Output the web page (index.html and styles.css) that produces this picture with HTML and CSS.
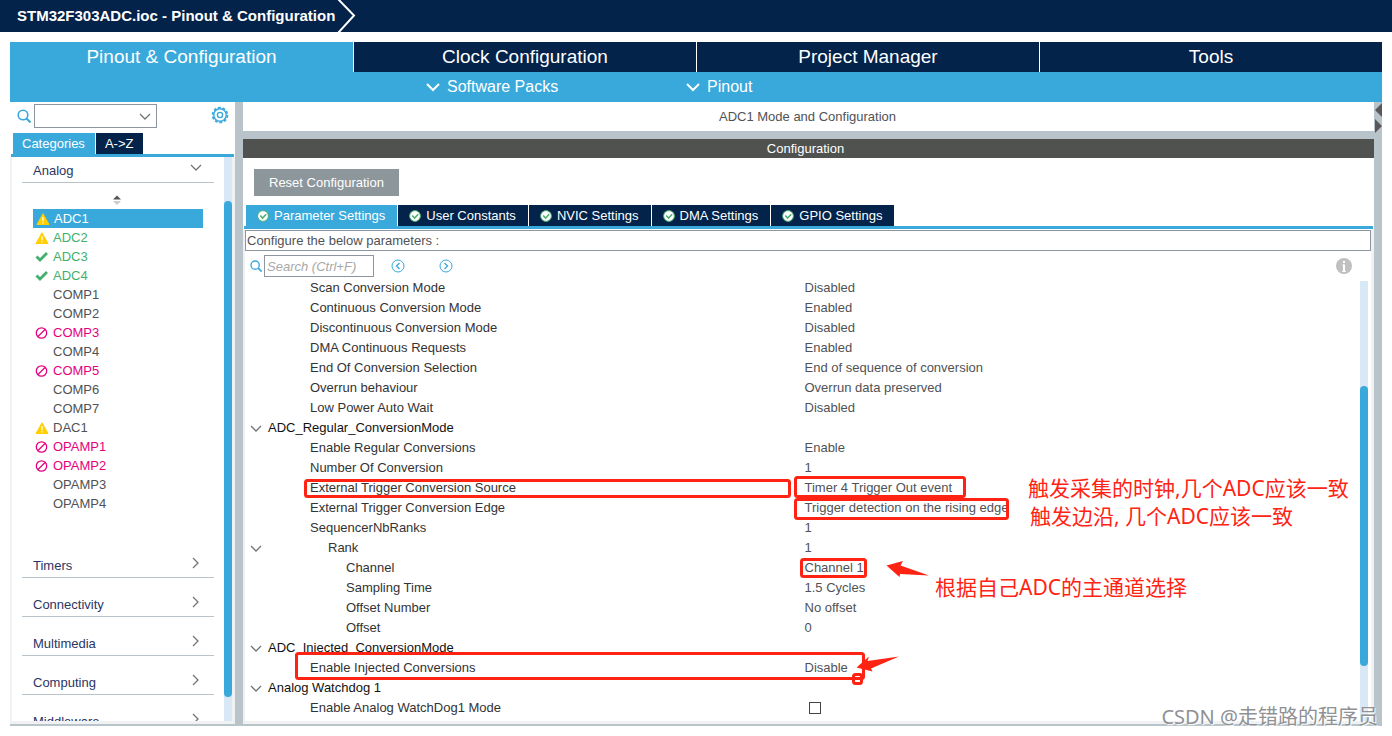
FILE: index.html
```html
<!DOCTYPE html>
<html lang="en">
<head>
<meta charset="utf-8">
<title>STM32F303ADC.ioc - Pinout &amp; Configuration</title>
<link rel="stylesheet" href="styles.css">
</head>
<body>
<svg class="defs" aria-hidden="true">
  <symbol id="down" viewBox="0 0 12 8"><path d="M1 1l5 5 5-5" fill="none" stroke="currentColor" stroke-width="1.3"/></symbol>
  <symbol id="right" viewBox="0 0 8 12"><path d="M1 1l5 5-5 5" fill="none" stroke="currentColor" stroke-width="1.3"/></symbol>
  <symbol id="lens" viewBox="0 0 14 14"><circle cx="6" cy="6" r="4.8" fill="none" stroke="currentColor" stroke-width="1.6"/><path d="M9.5 9.5l4 4" stroke="currentColor" stroke-width="2"/></symbol>
  <symbol id="warn" viewBox="0 0 14 12"><path d="M7 .8L13 11.5H1z" fill="#ffcf01" stroke="#ffcf01" stroke-linejoin="round"/><path d="M7 4v4.2M7 9.3v1.2" stroke="#fff" stroke-width="1.2"/></symbol>
  <symbol id="check" viewBox="0 0 14 12"><path d="M1.5 5.5L5 9l7-7" fill="none" stroke="#42b06d" stroke-width="2.8"/></symbol>
  <symbol id="ban" viewBox="0 0 14 12"><circle cx="6.5" cy="6" r="5.2" fill="none" stroke="#e6007e" stroke-width="1.3"/><path d="M3 9.5l7-7" stroke="#e6007e" stroke-width="1.2"/></symbol>
  <symbol id="ok" viewBox="0 0 12 12"><circle cx="6" cy="6" r="5.4" fill="#fff" stroke="#49b170" stroke-width="1"/><path d="M3.2 5.6l2.4 2.5 3.6-3.8" fill="none" stroke="#49b170" stroke-width="1.5"/></symbol>
</svg>
<div class="page">
  <header class="title">
    <h1>STM32F303ADC.ioc - Pinout &amp; Configuration</h1>
    <svg class="crumb" viewBox="0 0 20 32"><path d="M2 -1L18 15.500 2 33" fill="none" stroke="#fff" stroke-width="2"/></svg>
  </header>
  <nav class="tabs">
    <button class="active">Pinout &amp; Configuration</button>
    <button>Clock Configuration</button>
    <button>Project Manager</button>
    <button>Tools</button>
  </nav>
  <div class="menus">
    <button><svg viewBox="0 0 14 10"><path d="M1 2l6 6 6-6" fill="none" stroke="#fff" stroke-width="2"/></svg>Software Packs</button>
    <button><svg viewBox="0 0 14 10"><path d="M1 2l6 6 6-6" fill="none" stroke="#fff" stroke-width="2"/></svg>Pinout</button>
  </div>
  <main class="work">
    <aside class="side">
      <div class="find">
        <svg class="lens"><use href="#lens"/></svg>
        <div class="combo"><select aria-label="Find peripheral"><option></option></select><svg class="down"><use href="#down"/></svg></div>
        <button class="gear" aria-label="Settings"><svg viewBox="0 0 18 18"><g fill="none" stroke="#39a9dc" stroke-width="1.400"><circle cx="9" cy="9" r="6.200"/><circle cx="9" cy="9" r="2.600"/><circle cx="9" cy="9" r="7.400" stroke-width="1.800" stroke-dasharray="2.900 1.750"/></g></svg></button>
      </div>
      <div class="subtabs side-tabs"><button class="active">Categories</button><button>A-&gt;Z</button></div>
      <div class="tree">
        <div class="tree-body">
          <button class="cat">Analog<svg class="down"><use href="#down"/></svg></button>
          <svg class="sort" viewBox="0 0 8 10"><path d="M0 4.500L4 .5l4 4z" fill="#555"/><path d="M0 6h8L4 10z" fill="#ccc"/></svg>
          <ul>
            <li class="sel"><svg><use href="#warn"/></svg>ADC1</li>
            <li class="green"><svg><use href="#warn"/></svg>ADC2</li>
            <li class="green"><svg><use href="#check"/></svg>ADC3</li>
            <li class="green"><svg><use href="#check"/></svg>ADC4</li>
            <li><svg></svg>COMP1</li>
            <li><svg></svg>COMP2</li>
            <li class="pink"><svg><use href="#ban"/></svg>COMP3</li>
            <li><svg></svg>COMP4</li>
            <li class="pink"><svg><use href="#ban"/></svg>COMP5</li>
            <li><svg></svg>COMP6</li>
            <li><svg></svg>COMP7</li>
            <li><svg><use href="#warn"/></svg>DAC1</li>
            <li class="pink"><svg><use href="#ban"/></svg>OPAMP1</li>
            <li class="pink"><svg><use href="#ban"/></svg>OPAMP2</li>
            <li><svg></svg>OPAMP3</li>
            <li><svg></svg>OPAMP4</li>
          </ul>
          <button class="cat">Timers<svg class="right"><use href="#right"/></svg></button>
          <button class="cat">Connectivity<svg class="right"><use href="#right"/></svg></button>
          <button class="cat">Multimedia<svg class="right"><use href="#right"/></svg></button>
          <button class="cat">Computing<svg class="right"><use href="#right"/></svg></button>
          <button class="cat">Middleware<svg class="right"><use href="#right"/></svg></button>
        </div>
        <div class="bar side-bar"><i></i></div>
      </div>
    </aside>
    <section class="center">
      <h2 class="mode">ADC1 Mode and Configuration</h2>
      <h3 class="conf">Configuration</h3>
      <div class="panel">
        <button class="reset">Reset Configuration</button>
        <div class="subtabs">
          <button class="active"><svg><use href="#ok"/></svg>Parameter Settings</button>
          <button><svg><use href="#ok"/></svg>User Constants</button>
          <button><svg><use href="#ok"/></svg>NVIC Settings</button>
          <button><svg><use href="#ok"/></svg>DMA Settings</button>
          <button><svg><use href="#ok"/></svg>GPIO Settings</button>
        </div>
        <div class="params">
          <p class="hint">Configure the below parameters :</p>
          <div class="search">
            <svg class="lens"><use href="#lens"/></svg>
            <input type="text" placeholder="Search (Ctrl+F)" aria-label="Search parameters">
            <button aria-label="Previous"><svg viewBox="0 0 14 14" fill="none" stroke="#39a9dc"><circle cx="7" cy="7" r="6"/><path d="M8.500 4L5.500 7l3 3" stroke-width="1.300"/></svg></button>
            <button aria-label="Next"><svg viewBox="0 0 14 14" fill="none" stroke="#39a9dc"><circle cx="7" cy="7" r="6"/><path d="M5.500 4l3 3-3 3" stroke-width="1.300"/></svg></button>
            <svg class="info" viewBox="0 0 16 16"><circle cx="8" cy="8" r="8" fill="#c0c0c0"/><path d="M8 3v2M8 6.500v7" stroke="#fff" stroke-width="2"/><path d="M6.500 7H8M6 13.300h4" stroke="#fff"/></svg>
          </div>
          <div class="grid">
            <table>
              <tr><td class="p">Scan Conversion Mode</td><td>Disabled</td></tr>
              <tr><td class="p">Continuous Conversion Mode</td><td>Enabled</td></tr>
              <tr><td class="p">Discontinuous Conversion Mode</td><td>Disabled</td></tr>
              <tr><td class="p">DMA Continuous Requests</td><td>Enabled</td></tr>
              <tr><td class="p">End Of Conversion Selection</td><td>End of sequence of conversion</td></tr>
              <tr><td class="p">Overrun behaviour</td><td>Overrun data preserved</td></tr>
              <tr><td class="p">Low Power Auto Wait</td><td>Disabled</td></tr>
              <tr><td class="g" colspan="2"><svg class="down"><use href="#down"/></svg>ADC_Regular_ConversionMode</td></tr>
              <tr><td class="p">Enable Regular Conversions</td><td>Enable</td></tr>
              <tr><td class="p">Number Of Conversion</td><td>1</td></tr>
              <tr><td class="p">External Trigger Conversion Source</td><td>Timer 4 Trigger Out event</td></tr>
              <tr><td class="p">External Trigger Conversion Edge</td><td>Trigger detection on the rising edge</td></tr>
              <tr><td class="p">SequencerNbRanks</td><td>1</td></tr>
              <tr><td class="g rank"><svg class="down"><use href="#down"/></svg>Rank</td><td>1</td></tr>
              <tr><td class="c">Channel</td><td>Channel 1</td></tr>
              <tr><td class="c">Sampling Time</td><td>1.5 Cycles</td></tr>
              <tr><td class="c">Offset Number</td><td>No offset</td></tr>
              <tr><td class="c">Offset</td><td>0</td></tr>
              <tr><td class="g" colspan="2"><svg class="down"><use href="#down"/></svg>ADC_Injected_ConversionMode</td></tr>
              <tr><td class="p">Enable Injected Conversions</td><td>Disable</td></tr>
              <tr><td class="g" colspan="2"><svg class="down"><use href="#down"/></svg>Analog Watchdog 1</td></tr>
              <tr><td class="p"><label for="wd1">Enable Analog WatchDog1 Mode</label></td><td><input type="checkbox" id="wd1"></td></tr>
            </table>
            <div class="bar grid-bar"><i></i></div>
          </div>
        </div>
      </div>
    </section>
    <div class="rail"><svg viewBox="0 0 8 32"><path d="M8 1v14L1 8zM1 17v14l7-7z" fill="#58595b"/></svg></div>
  </main>
  <div class="notes">
    <svg class="marks" viewBox="0 0 1392 736">
      <g fill="none" stroke="#ff2314" stroke-width="3">
        <rect x="305.500" y="480.500" width="484" height="16" rx="2"/>
        <rect x="795.500" y="477.500" width="169" height="19" rx="2"/>
        <rect x="795.500" y="499.500" width="212" height="19" rx="2"/>
        <rect x="801.500" y="559.500" width="64" height="17" rx="2"/>
        <rect x="296.500" y="653.500" width="567" height="25" rx="2"/>
        <rect x="853.500" y="674.500" width="8" height="9" rx="2"/>
      </g>
      <path d="M886.500 565.500L903 561l-2.500 4.500L929 575.500l-29-1.500-.5 3z" fill="#ff2314"/>
      <path d="M856.500 667.500L869 656.500l-1.500 4.500 31.500-4.500-28 12 1.500 3z" fill="#ff2314"/>
    </svg>
    <p class="n1">触发采集的时钟,几个ADC应该一致</p>
    <p class="n2">触发边沿, 几个ADC应该一致</p>
    <p class="n3">根据自己ADC的主通道选择</p>
    <p class="credit">CSDN @走错路的程序员</p>
  </div>
</div>
</body>
</html>
```
FILE: styles.css
```css
* { box-sizing: border-box; }
body { margin: 0; background: #fff; color: #505255; font: 13px/20px "Liberation Sans", Arial, sans-serif; }
h1, h2, h3, p, ul { margin: 0; padding: 0; font-size: inherit; font-weight: 400; }
button { border: 0; padding: 0; background: none; color: inherit; font: inherit; cursor: pointer; }
svg { display: block; flex: none; }
.defs { position: absolute; width: 0; height: 0; }
.page { position: relative; height: 100vh; padding-bottom: 10px; display: flex; flex-direction: column; overflow: hidden; }

.title { display: flex; flex: none; height: 32px; padding-left: 17px; background: #03234b; color: #fff; }
.title h1 { font-size: 15px; font-weight: 700; line-height: 32px; }
.crumb { width: 20px; height: 32px; margin-left: 1px; }

.tabs { display: grid; grid-template-columns: repeat(4, 1fr); flex: none; height: 30px; margin: 10px 10px 0; background: #03234b; color: #fff; font-size: 19px; }
.tabs button + button { border-left: 1px solid #fff; }
.tabs .active { background: #39a9dc; }
.menus { display: flex; flex: none; height: 30px; margin: 0 10px; padding-left: 416px; background: #39a9dc; color: #fff; font-size: 16px; }
.menus button { display: flex; align-items: center; gap: 7px; width: 260px; }
.menus svg { width: 14px; height: 10px; }

.work { display: flex; flex: 1; min-height: 0; margin: 0 10px; padding-bottom: 2px; background: #b9c4ca; }
.side { display: flex; flex-direction: column; flex: none; width: 225px; background: #fff; }
.find { display: flex; flex: none; height: 31px; padding: 2px 6px 0 7px; }
.lens { width: 14px; height: 14px; color: #39a9dc; }
.find .lens { margin: 5px 3px 0 0; }
.combo { position: relative; width: 123px; height: 24px; }
.combo select { width: 100%; height: 100%; border: 1px solid #8d969e; border-radius: 0; background: #fff; appearance: none; }
.combo .down { position: absolute; right: 6px; top: 9px; pointer-events: none; }
.down { width: 12px; height: 8px; color: #70757a; }
.right { width: 8px; height: 12px; color: #70757a; }
.gear { margin-left: auto; height: 22px; }
.gear svg { width: 18px; height: 18px; }

.subtabs { display: flex; flex: none; gap: 1px; height: 24px; padding-left: 2px; margin: 0 1px; border-bottom: 3px solid #39a9dc; color: #fff; }
.subtabs button { display: flex; align-items: center; gap: 5px; padding: 0 12px 0 11px; background: #03234b; }
.subtabs .active { background: #39a9dc; }
.subtabs svg { width: 12px; height: 12px; }
.subtabs.side-tabs button { padding: 0 10px 0 9px; }

.tree { display: flex; flex: 1; min-height: 0; border: solid #f0f1f2; border-width: 0 3px 3px 2px; }
.tree-body { flex: 1; padding: 0 10px; overflow: hidden; }
.cat { display: flex; align-items: center; justify-content: space-between; width: 100%; height: 26px; margin-top: 13px; padding: 2px 12px 0 11px; border-bottom: 1px solid #b9c4ca; color: #2b3564; }
.cat:first-child { margin-top: 0; }
.cat svg { margin-bottom: 6px; }
.cat .right { margin-right: 2px; }
.sort { width: 8px; height: 10px; margin: 12px auto 4px 91px; }
.tree ul { margin: 0 11px 39px; list-style: none; }
.tree li { display: flex; align-items: center; gap: 4px; height: 19px; padding-left: 2px; line-height: 18px; }
.tree li svg { width: 14px; height: 12px; }
.tree .sel { padding-left: 3px; background: #39a9dc; color: #fff; }
.green { color: #42b06d; }
.pink { color: #e6007e; }
.bar { width: 8px; background: #d9e8f5; }
.bar i { display: block; border-radius: 4px; background: #39a9dc; }
.side-bar { padding: 44px 0 24px; }
.side-bar i { height: 100%; }

.center { display: flex; flex-direction: column; flex: 1; min-width: 0; margin-left: 8px; text-align: left; }
.mode { flex: none; height: 29px; padding-right: 2px; background: #fff; line-height: 29px; text-align: center; }
.conf { flex: none; height: 19px; margin-top: 8px; padding-right: 6px; background: #505250; color: #fff; line-height: 19px; text-align: center; }
.panel { display: flex; flex-direction: column; flex: 1; min-height: 0; padding-top: 11px; background: #fff; }
.reset { flex: none; align-self: flex-start; height: 27px; margin: 0 0 9px 11px; padding: 0 15px; background: #8d969b; color: #fff; }
.params { display: flex; flex-direction: column; flex: 1; min-height: 0; padding-top: 1px; border: solid #f0f1f2; border-width: 0 3px 3px 2px; }
.hint { flex: none; height: 21px; padding-left: 1px; border: 1px solid #8d969e; line-height: 19px; }
.search { display: flex; align-items: center; flex: none; height: 27px; padding: 3px 19px 0 5px; }
.search .lens { width: 12px; height: 12px; margin-right: 2px; }
.search input { width: 110px; height: 22px; padding: 0 2px; border: 1px solid #8d969e; border-radius: 0; font: italic 13px "Liberation Sans", Arial, sans-serif; }
.search input::placeholder { color: #a8a8a8; }
.search button { margin-left: 17px; }
.search button + button { margin-left: 34px; }
.search button svg { width: 14px; height: 14px; }
.info { width: 16px; height: 16px; margin-left: auto; }

.grid { display: flex; flex: 1; min-height: 0; padding-right: 3px; overflow: hidden; }
.grid table { flex: 1; align-self: flex-start; table-layout: fixed; border-collapse: collapse; }
.grid td { width: 50%; height: 20px; padding: 0 0 0 2px; white-space: nowrap; }
.grid .p { padding-left: 65px; color: #333; }
.grid .c { padding-left: 101px; color: #333; }
.grid .g { padding-left: 5px; color: #111; }
.g .down { display: inline-block; margin-right: 6px; vertical-align: middle; }
.grid .rank { color: #333; }
.rank .down { margin-right: 66px; }
.grid input { display: block; appearance: none; width: 12px; height: 12px; margin: 0 0 0 4px; border: 1px solid #444; background: #fff; }
.grid-bar { margin-top: 3px; padding: 105px 0 55px; }
.grid-bar i { height: 100%; }
.rail { flex: none; width: 8px; }
.rail svg { width: 8px; height: 32px; }

/* Hand-drawn remarks laid over the configuration panel */
.notes { position: absolute; top: 0; left: 0; width: 1392px; height: 736px; pointer-events: none; color: #ff2314; font: 21px/28px "Noto Sans", "Noto Sans CJK SC", sans-serif; white-space: nowrap; }
.notes p { position: absolute; }
.marks { width: 100%; height: 100%; }
.n1 { left: 1028px; top: 474px; }
.n2 { left: 1030px; top: 502px; }
.n3 { left: 935px; top: 573px; }
.notes .credit { right: 14px; top: 703px; color: #8f9194; font-size: 20px; text-shadow: 1px 1px 1px #fff; }
```
